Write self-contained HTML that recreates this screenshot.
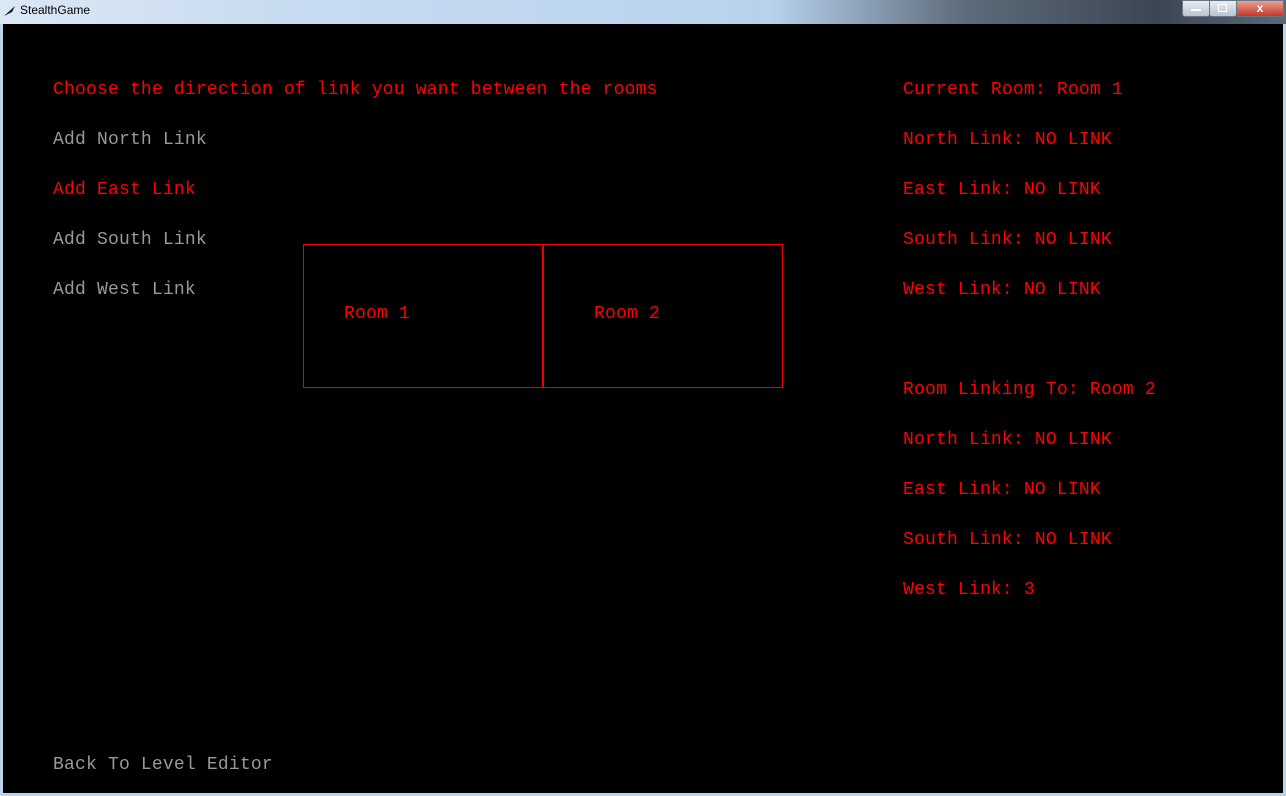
<!DOCTYPE html>
<html><head><style>
body{margin:0;width:1286px;height:796px;overflow:hidden;background:#bcd3ea;position:relative;font-family:"Liberation Mono",monospace;}
#title{position:absolute;left:0;top:0;width:1286px;height:24px;background:linear-gradient(90deg,#dbe8f5 0,#c9dcf0 20%,#b8d2ee 60%,#5d6b7a 75%,#3b4654 90%,#5a6878 100%);}
#title span{position:absolute;left:20px;top:3px;font:12px "Liberation Sans",sans-serif;color:#000;}
#game{position:absolute;left:3px;top:24px;width:1280px;height:769px;background:#000;}
.t{position:absolute;font-size:18px;line-height:20px;white-space:pre;letter-spacing:0.19px;}
.r{color:#f00}.g{color:#999}
.box{position:absolute;border:1px solid #e00;}
.btn{position:absolute;top:0;height:15px;border:1px solid #6a7482;border-radius:0 0 3px 3px;background:linear-gradient(#e8edf3,#b8c4d2);}
</style></head><body>
<div id="title"><span>StealthGame</span>
<svg style="position:absolute;left:3px;top:5px" width="14" height="12"><path d="M1 11 L12 1 L9 7 Z" fill="#111"/></svg>
<div class="btn" style="left:1182px;width:26px"><div style="position:absolute;left:8px;top:8px;width:10px;height:2px;background:#fff"></div></div>
<div class="btn" style="left:1209px;width:26px"><div style="position:absolute;left:8px;top:3px;width:7px;height:6px;border:1px solid #fff"></div></div>
<div class="btn" style="left:1236px;width:46px;background:linear-gradient(#e8a090,#c3392a);color:#fff;font:bold 12px 'Liberation Sans';text-align:center;">x</div>
</div>
<div id="game">
<div class="t r" style="left:50px;top:56px">Choose the direction of link you want between the rooms</div>
<div class="t g" style="left:50px;top:106px">Add North Link</div>
<div class="t r" style="left:50px;top:156px">Add East Link</div>
<div class="t g" style="left:50px;top:206px">Add South Link</div>
<div class="t g" style="left:50px;top:256px">Add West Link</div>
<div class="t g" style="left:50px;top:731px">Back To Level Editor</div>
<div class="box" style="left:300px;top:220px;width:239px;height:142px"></div>
<div class="box" style="left:539px;top:220px;width:239px;height:142px"></div>
<div class="t r" style="left:341px;top:280px">Room 1</div>
<div class="t r" style="left:591px;top:280px">Room 2</div>
<div class="t r" style="left:900px;top:56px">Current Room: Room 1</div>
<div class="t r" style="left:900px;top:106px">North Link: NO LINK</div>
<div class="t r" style="left:900px;top:156px">East Link: NO LINK</div>
<div class="t r" style="left:900px;top:206px">South Link: NO LINK</div>
<div class="t r" style="left:900px;top:256px">West Link: NO LINK</div>
<div class="t r" style="left:900px;top:356px">Room Linking To: Room 2</div>
<div class="t r" style="left:900px;top:406px">North Link: NO LINK</div>
<div class="t r" style="left:900px;top:456px">East Link: NO LINK</div>
<div class="t r" style="left:900px;top:506px">South Link: NO LINK</div>
<div class="t r" style="left:900px;top:556px">West Link: 3</div>
</div>
</body></html>
